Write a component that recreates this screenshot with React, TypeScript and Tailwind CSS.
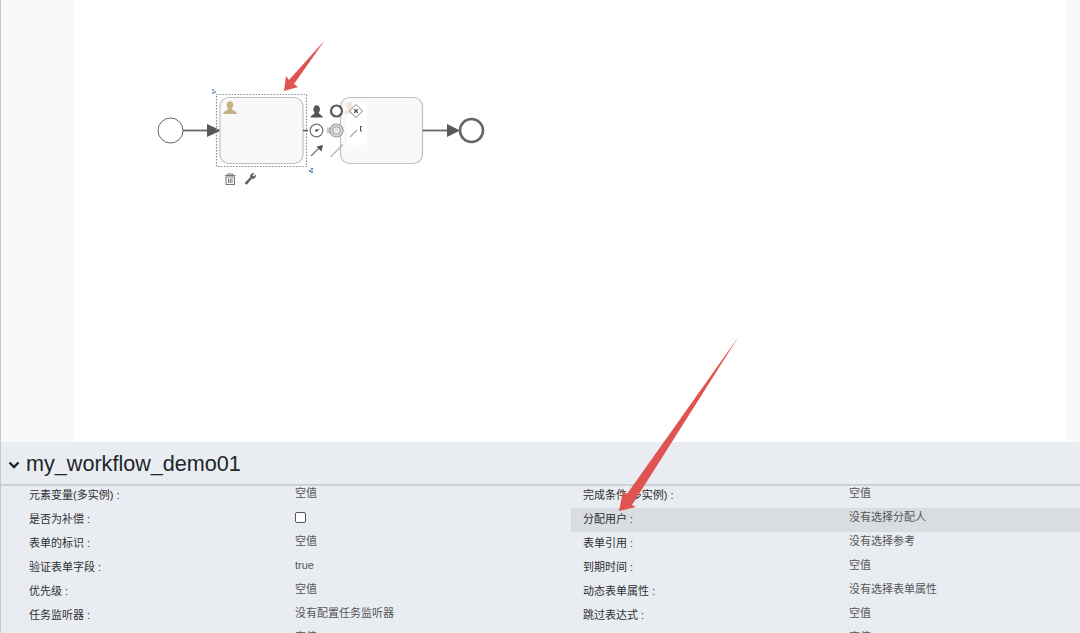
import React from 'react';

const rows = [
  ['元素变量(多实例) :', '空值', '完成条件(多实例) :', '空值'],
  ['是否为补偿 :', 'check', '分配用户 :', '没有选择分配人'],
  ['表单的标识 :', '空值', '表单引用 :', '没有选择参考'],
  ['验证表单字段 :', 'true', '到期时间 :', '空值'],
  ['优先级 :', '空值', '动态表单属性 :', '没有选择表单属性'],
  ['任务监听器 :', '没有配置任务监听器', '跳过表达式 :', '空值'],
  ['文档 :', '空值', '类别 :', '空值'],
];

function Diagram() {
  return (
    <svg width="1080" height="442" viewBox="0 0 1080 442" className="absolute top-0 left-0">
      {/* start event */}
      <circle cx="170.5" cy="130.5" r="12.5" fill="#fff" stroke="#666" strokeWidth="1" />
      <path d="M183 130.5H208" stroke="#666" strokeWidth="1.8" />
      <path d="M207 124L221 130.5L207 137Z" fill="#585858" />

      {/* selected user task */}
      <rect x="216.5" y="94.500" width="90" height="72" fill="none" stroke="#8a8a8a" strokeWidth="1.200" strokeDasharray="1.500 1.500" />
      <rect x="220" y="97.500" width="83" height="66" rx="9" fill="#f9f9f9" stroke="#c0c0c0" strokeWidth="1.200" />
      <path d="M223 114c.4-3 4.500-3 5.200-5.500-2-1.500-2.500-7 1.800-7.500 4.300.5 3.800 6 1.800 7.500.7 2.500 4.800 2.500 5.200 5.500z" fill="#c9b182" />
      <path d="M212 89h2v2h-2zM214 91h2v2h-2zM212 92h2v2h-2z" fill="#8fa8d2" />
      <path d="M309 170h2v2h-2zM311 168h2v2h-2zM311 171h2v2h-2z" fill="#6f8cbd" />

      {/* second task, behind the palette */}
      <rect x="340.500" y="97.500" width="82" height="66" rx="9" fill="#f9f9f9" stroke="#c0c0c0" strokeWidth="1.200" />
      <rect x="347" y="102" width="20" height="43" fill="#fff" />
      <path d="M344 114c.4-3 3-3 3.700-5.500-2-1.500-2.500-7 1.800-7.500 4.300.5 3.800 6 1.800 7.500.7 2.500 3.300 2.500 3.700 5.500z" fill="#efe6d6" />
      <path d="M422.500 130.500H448" stroke="#666" strokeWidth="1.800" />
      <path d="M447 124L460 130.500L447 137Z" fill="#585858" />
      <circle cx="471.500" cy="130.500" r="11.500" fill="#fff" stroke="#666" strokeWidth="2.600" />

      {/* palette */}
      <path d="M303 130.500H308" stroke="#555" strokeWidth="1.500" />
      <path d="M310.500 117.500c.4-2.500 3.500-2.700 4.200-5-2-1.500-1.800-7 2-7.300 3.800.3 4 5.800 2 7.300.7 2.300 3.800 2.500 4.200 5z" fill="#555" />
      <circle cx="336.500" cy="111" r="5.500" fill="#fff" stroke="#5a5a5a" strokeWidth="2.200" />
      <circle cx="316.500" cy="130.500" r="6.300" fill="#fff" stroke="#777" strokeWidth="1.300" />
      <path d="M316.500 130.500L319.500 129" stroke="#777" strokeWidth="1" />
      <circle cx="316.500" cy="130.500" r="1.300" fill="#444" />
      <path d="M327 127.500h4v6h-4z" fill="#c8c8c8" />
      <circle cx="336.500" cy="130.500" r="6.500" fill="#ddd" stroke="#999" strokeWidth="1.200" />
      <circle cx="336.500" cy="130.500" r="4" fill="#e4e4e4" stroke="#999" strokeWidth="1" />
      <path d="M356 104.500l6.500 6.500-6.500 6.500-6.500-6.500z" fill="#fff" stroke="#808080" strokeWidth="1" />
      <path d="M354.300 109.300l3.400 3.400M357.700 109.300l-3.400 3.400" stroke="#555" strokeWidth="1.500" />
      <path d="M350 137l7-7" stroke="#aaa" strokeWidth="1.200" />
      <path d="M362 126.500h-1.500v4.500h1.500" fill="none" stroke="#444" strokeWidth="1" />
      <path d="M311 156l8-8" stroke="#777" strokeWidth="1.200" />
      <path d="M323 145l-6.500 1.500 5 5z" fill="#555" />
      <path d="M330.500 157l12.500-12.500" stroke="#b5b5b5" strokeWidth="1.200" />

      {/* bottom icons */}
      <path d="M225 175.500h10.500M228 175.500v-1.500h4.500v1.500M226 177h8.500v7.500h-8.500zM228.500 178.500v4.500M230.300 178.500v4.500M232 178.500v4.500" fill="none" stroke="#777" strokeWidth="1.100" />
      <path d="M245 183l5.500-5.800c-.6-2.300.8-4 3.500-4l-1.700 2 1.300 1.500 2-1.600c.2 2.600-1.800 4-4 3.500l-5 5.800z" fill="#5c5c5c" stroke="#5c5c5c" strokeWidth=".6" />
    </svg>
  );
}

export default function App() {
  return (
    <div className="relative flex flex-col h-[633px] w-[1080px] overflow-hidden bg-white font-['Liberation_Sans','Noto_Sans_CJK_SC',sans-serif]">
      <div className="flex h-[442px] shrink-0">
        <div className="w-[75px] bg-[#f9f9f9] border-l border-[#c9c9c9]" />
        <div className="flex-1 bg-white" />
        <div className="w-[13px] bg-[#f9f9f9]" />
      </div>
      <Diagram />

      <div className="flex-1 bg-[#e9edf2] overflow-hidden border-l border-[#c9c9c9]">
        <div className="flex items-center h-[44px] border-b-2 border-[#cdd1d5] pl-[7px]">
          <svg width="12" height="8" viewBox="0 0 12 8" className="mt-[3px]">
            <path d="M1.500 1.500L6 6l4.500-4.500" fill="none" stroke="#1f2226" strokeWidth="2.400" />
          </svg>
          <span className="ml-[6px] mt-[2px] text-[21.6px] text-[#22262a] leading-none">my_workflow_demo01</span>
        </div>
        <div className="grid grid-cols-[570px_1fr] -mt-[2px]">
          {rows.map((r, i) => (
            <React.Fragment key={i}>
              <div className="flex h-6 pl-[28px]">
                <span className="w-[266px] text-[11px] leading-[22px] text-[#2f2f2f]">{r[0]}</span>
                {r[1] === 'check' ? (
                  <span className="mt-[4px] h-[11px] w-[11px] rounded-[2px] border border-[#555] bg-white" />
                ) : (
                  <span className="text-[11px] leading-[18px] text-[#555]">{r[1]}</span>
                )}
              </div>
              <div className={i === 1 ? 'flex h-6 pl-[12px] bg-[#d9dde1]' : 'flex h-6 pl-[12px]'}>
                <span className="w-[266px] text-[11px] leading-[22px] text-[#2f2f2f]">{r[2]}</span>
                <span className="text-[11px] leading-[18px] text-[#555]">{r[3]}</span>
              </div>
            </React.Fragment>
          ))}
        </div>
      </div>

      {/* red annotation arrows */}
      <svg width="1080" height="633" viewBox="0 0 1080 633" className="absolute top-0 left-0 pointer-events-none">
        <path d="M325 40L294 84L298 87L284 91L286 76L289 80Z" fill="#df5450" />
        <path d="M739 336L632 505L636 507L619 511L623 491L627 494Z" fill="#df5450" />
      </svg>
    </div>
  );
}
